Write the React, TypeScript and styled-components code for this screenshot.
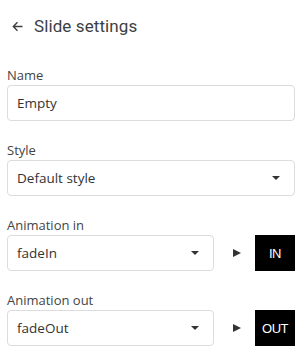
import React from 'react';
import styled, { createGlobalStyle } from 'styled-components';

const GlobalStyle = createGlobalStyle`
    html, body {
        margin: 0;
        padding: 0;
        background: #fff;
    }
    body {
        font-family: "Open Sans", "Liberation Sans", sans-serif;
        color: #333;
    }
`;

const Panel = styled.div`
    width: 301px;
    height: 353px;
    box-sizing: border-box;
    padding: 14px 6px 0 7px;
    display: flex;
    flex-direction: column;
`;

const Header = styled.div`
    display: flex;
    align-items: center;
    height: 24px;
    gap: 11px;
    padding-left: 5px;
    margin-bottom: 29px;
`;

const BackButton = styled.button`
    border: none;
    background: none;
    padding: 0;
    width: 11px;
    height: 11px;
    display: flex;
    color: #3c4043;
    cursor: pointer;
`;

const Title = styled.h1`
    margin: 0;
    font-family: Roboto, "Liberation Sans", sans-serif;
    font-size: 17px;
    font-weight: 400;
    line-height: 24px;
    letter-spacing: 0.1px;
    color: #3c4043;
`;

const Field = styled.div`
    display: flex;
    flex-direction: column;
    gap: 2px;
    margin-bottom: 21px;
`;

const Label = styled.label`
    font-size: 13px;
    line-height: 16px;
    color: #444;
`;

const Row = styled.div`
    display: flex;
    align-items: center;
`;

const Box = styled.div<{ $select?: boolean }>`
    flex: 1 1 auto;
    min-width: 0;
    height: 36px;
    box-sizing: border-box;
    border: 1px solid #dcdcdc;
    border-radius: 4px;
    display: flex;
    align-items: center;
    padding: 0 14px 0 9px;
    font-size: 13.5px;
    color: #333;
    cursor: ${(p) => (p.$select ? 'pointer' : 'text')};

    span {
        flex: 1;
    }
`;

const Caret = styled.i`
    width: 0;
    height: 0;
    border-left: 4px solid transparent;
    border-right: 4px solid transparent;
    border-top: 4px solid #333;
`;

const PlayButton = styled.button`
    border: none;
    background: none;
    padding: 0;
    margin: 0 14px 0 19px;
    width: 0;
    height: 0;
    border-top: 4.5px solid transparent;
    border-bottom: 4.5px solid transparent;
    border-left: 8px solid #333;
    cursor: pointer;
`;

const Preview = styled.div`
    width: 40px;
    height: 36px;
    background: #000;
    color: #fff;
    display: flex;
    align-items: center;
    justify-content: center;
    font-family: "Liberation Sans", Arial, sans-serif;
    font-size: 13px;
    letter-spacing: -0.5px;
`;

function Select({ value }: { value: string }) {
    return (
        <Box $select>
            <span>{value}</span>
            <Caret />
        </Box>
    );
}

function AnimationField({ label, value, tag }: { label: string; value: string; tag: string }) {
    return (
        <Field>
            <Label>{label}</Label>
            <Row>
                <Select value={value} />
                <PlayButton aria-label="play" />
                <Preview>{tag}</Preview>
            </Row>
        </Field>
    );
}

export default function App() {
    return (
        <>
            <GlobalStyle />
            <Panel>
                <Header>
                    <BackButton aria-label="back">
                        <svg width="11" height="11" viewBox="0 0 11 11" fill="none" stroke="currentColor" strokeWidth="1.4">
                            <path d="M10.5 5.5H1.5M5.5 1.3L1.3 5.5l4.2 4.2" />
                        </svg>
                    </BackButton>
                    <Title>Slide settings</Title>
                </Header>
                <Field>
                    <Label>Name</Label>
                    <Box>
                        <span>Empty</span>
                    </Box>
                </Field>
                <Field>
                    <Label>Style</Label>
                    <Select value="Default style" />
                </Field>
                <AnimationField label="Animation in" value="fadeIn" tag="IN" />
                <AnimationField label="Animation out" value="fadeOut" tag="OUT" />
            </Panel>
        </>
    );
}
